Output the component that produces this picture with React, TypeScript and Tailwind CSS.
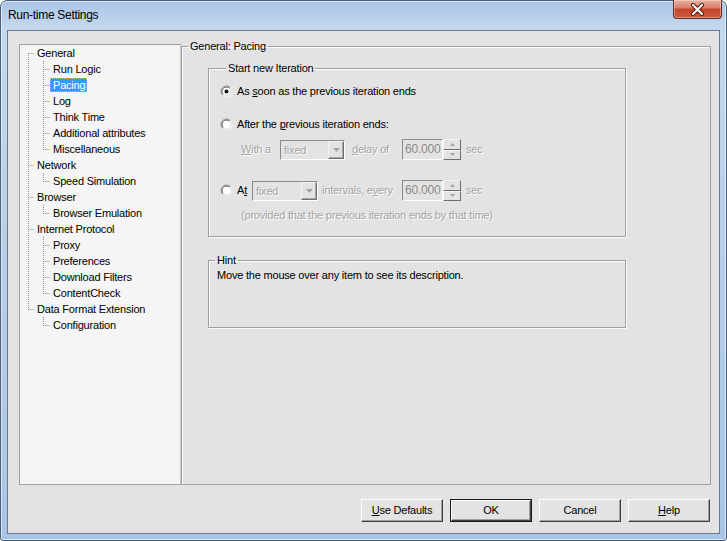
import React from 'react';

interface TreeItem {
  label: string;
  level: 0 | 1;
  first?: boolean;
  lastRoot?: boolean;
  lastChild?: boolean;
  underLast?: boolean;
  selected?: boolean;
}

const treeItems: TreeItem[] = [
  { label: 'General', level: 0, first: true },
  { label: 'Run Logic', level: 1 },
  { label: 'Pacing', level: 1, selected: true },
  { label: 'Log', level: 1 },
  { label: 'Think Time', level: 1 },
  { label: 'Additional attributes', level: 1 },
  { label: 'Miscellaneous', level: 1, lastChild: true },
  { label: 'Network', level: 0 },
  { label: 'Speed Simulation', level: 1, lastChild: true },
  { label: 'Browser', level: 0 },
  { label: 'Browser Emulation', level: 1, lastChild: true },
  { label: 'Internet Protocol', level: 0 },
  { label: 'Proxy', level: 1 },
  { label: 'Preferences', level: 1 },
  { label: 'Download Filters', level: 1 },
  { label: 'ContentCheck', level: 1, lastChild: true },
  { label: 'Data Format Extension', level: 0, lastRoot: true },
  { label: 'Configuration', level: 1, lastChild: true, underLast: true },
];

const dot = { stroke: '#8c8c8c', strokeWidth: 1, strokeDasharray: '1 1' };

const TreeLines: React.FC<{ item: TreeItem }> = ({ item }) => {
  if (item.level === 0) {
    return (
      <svg width="14" height="16" className="shrink-0">
        <line x1="8.5" y1={item.first ? 8 : 0} x2="8.5" y2={item.lastRoot ? 9 : 16} {...dot} />
        <line x1="8.5" y1="8.5" x2="14" y2="8.5" {...dot} />
      </svg>
    );
  }
  return (
    <svg width="30" height="16" className="shrink-0">
      {!item.underLast && <line x1="8.5" y1="0" x2="8.5" y2="16" {...dot} />}
      <line x1="23.5" y1="0" x2="23.5" y2={item.lastChild ? 9 : 16} {...dot} />
      <line x1="23.5" y1="8.5" x2="30" y2="8.5" {...dot} />
    </svg>
  );
};

const Radio: React.FC<{ checked?: boolean }> = ({ checked }) => (
  <svg width="13" height="13" viewBox="0 0 13 13" className="shrink-0">
    <circle cx="6.5" cy="6.5" r="5.5" fill="#fff" />
    <path d="M2.6 10.4 A5.5 5.5 0 0 1 10.4 2.6" fill="none" stroke="#8f8f8f" strokeWidth="1" />
    <path d="M10.4 2.6 A5.5 5.5 0 0 1 2.6 10.4" fill="none" stroke="#f4f4f4" strokeWidth="1" />
    <path d="M3.3 9.7 A4.5 4.5 0 0 1 9.7 3.3" fill="none" stroke="#555" strokeWidth="1" />
    <path d="M9.7 3.3 A4.5 4.5 0 0 1 3.3 9.7" fill="none" stroke="#d8d8d8" strokeWidth="1" />
    {checked && <circle cx="6.5" cy="6.5" r="2" fill="#111" />}
  </svg>
);

const dis = 'text-[#a3a3a3] [text-shadow:1px_1px_0_#ffffff]';

const Combo: React.FC<{ width: string }> = ({ width }) => (
  <div className={`${width} h-[20px] flex border border-t-[#8a8a8a] border-l-[#8a8a8a] border-r-white border-b-white`}>
    <div className={`flex-1 pl-[3px] leading-[18px] ${dis}`}>fixed</div>
    <div className="w-[16px] h-full flex items-center justify-center border border-t-[#f4f4f4] border-l-[#f4f4f4] border-r-[#6e6e6e] border-b-[#6e6e6e] shadow-[inset_-1px_-1px_0_#a8a8a8]">
      <svg width="7" height="4" viewBox="0 0 7 4">
        <path d="M0 0 H7 L3.5 4 Z" fill="#a3a3a3" />
      </svg>
    </div>
  </div>
);

const Spin: React.FC = () => (
  <div className="w-[59px] h-[21px] flex">
    <div className="w-[41px] h-full border border-t-[#8a8a8a] border-l-[#8a8a8a] border-r-white border-b-white pl-[2px] leading-[19px] text-[12px] text-[#8a8a8a]">
      60.000
    </div>
    <div className="w-[18px] h-full flex flex-col">
      <div className="flex-1 flex items-center justify-center border border-t-[#f4f4f4] border-l-[#f4f4f4] border-r-[#6e6e6e] border-b-[#6e6e6e]">
        <svg width="5" height="3" viewBox="0 0 5 3">
          <path d="M0 3 H5 L2.5 0 Z" fill="#a3a3a3" />
        </svg>
      </div>
      <div className="flex-1 flex items-center justify-center border border-t-[#f4f4f4] border-l-[#f4f4f4] border-r-[#6e6e6e] border-b-[#6e6e6e]">
        <svg width="5" height="3" viewBox="0 0 5 3">
          <path d="M0 0 H5 L2.5 3 Z" fill="#a3a3a3" />
        </svg>
      </div>
    </div>
  </div>
);

const Button: React.FC<{ children: React.ReactNode; isDefault?: boolean }> = ({ children, isDefault }) => {
  if (isDefault) {
    return (
      <div className="w-[82px] h-[23px] border border-[#1a1a1a]">
        <div className="w-full h-full flex items-center justify-center border border-t-white border-l-white border-r-[#404040] border-b-[#404040] shadow-[inset_-1px_-1px_0_#a0a0a0]">
          {children}
        </div>
      </div>
    );
  }
  return (
    <div className="w-[82px] h-[23px] flex items-center justify-center border border-t-white border-l-white border-r-[#404040] border-b-[#404040] shadow-[inset_-1px_-1px_0_#a0a0a0]">
      {children}
    </div>
  );
};

const App: React.FC = () => {
  return (
    <div className="w-[727px] h-[541px] overflow-hidden bg-white font-[family-name:'Liberation_Sans',Arial,sans-serif] text-black">
      <div className="h-full flex flex-col rounded-t-[7px] rounded-b-[3px] border border-[#4b5f7a] shadow-[inset_0_0_0_1px_rgba(255,255,255,0.55)] bg-[linear-gradient(180deg,#a9c5e6_0%,#c4d8ef_5%,#b8cfea_45%,#a9c5e6_100%)]">
        {/* title bar */}
        <div className="h-[29px] shrink-0 flex items-start">
          <span className="ml-[7px] mt-[7px] text-[12px] leading-[15px] tracking-[-0.3px]">Run-time Settings</span>
          <div className="ml-auto mr-[4px] -mt-px w-[49px] h-[19px] rounded-b-[4px] border border-t-0 border-[#6a2a20] bg-[linear-gradient(180deg,#eab0a2_0%,#d9806c_42%,#c3452d_52%,#cd5c40_100%)] shadow-[inset_0_0_0_1px_rgba(255,255,255,0.35)] flex items-center justify-center">
            <svg width="15" height="13" viewBox="0 0 15 13">
              <path d="M3 2 L12 11 M12 2 L3 11" stroke="#4a1208" strokeWidth="4" strokeLinecap="round" />
              <path d="M3 2 L12 11 M12 2 L3 11" stroke="#ffffff" strokeWidth="2.2" strokeLinecap="round" />
            </svg>
          </div>
        </div>

        {/* client area */}
        <div className="mx-[6px] mb-[6px] flex-1 flex flex-col border border-[#6b7a8c] bg-[#e3e3e3] text-[11px] tracking-[-0.2px] pt-[9px] pl-[11px] pr-[8px]">
          <div className="flex items-start">
            {/* tree */}
            <div className="mt-[4px] w-[162px] h-[441px] shrink-0 border border-[#a0a0a0] border-r-[#c8c8c8] bg-[#f5f5f5]">
              {treeItems.map((item) => (
                <div key={item.label} className="h-[16px] flex items-center">
                  <TreeLines item={item} />
                  <span
                    className={
                      item.selected
                        ? 'h-[14px] leading-[14px] pl-[3px] pr-[2px] bg-[#3399ff] text-white outline-1 outline-dotted outline-[#d9b870] -outline-offset-1'
                        : 'h-[14px] leading-[14px] pl-[3px] pr-[2px]'
                    }
                  >
                    {item.label}
                  </span>
                </div>
              ))}
            </div>

            {/* General: Pacing */}
            <fieldset className="flex-1 h-[445px] border border-[#a0a0a0] shadow-[inset_1px_1px_0_#fafafa]">
              <legend className="ml-[6px] px-[2px] leading-[13px]">General: Pacing</legend>

              <fieldset className="mt-[9px] ml-[26px] w-[418px] border border-[#a0a0a0] shadow-[inset_1px_1px_0_#fafafa,1px_1px_0_#fafafa] pl-[11px] pb-[13px]">
                <legend className="ml-[6px] px-[2px] leading-[13px]">Start new Iteration</legend>

                <div className="mt-[7px] h-[18px] flex items-center gap-[4px]">
                  <Radio checked />
                  <span>
                    As <u>s</u>oon as the previous iteration ends
                  </span>
                </div>

                <div className="mt-[15px] h-[18px] flex items-center gap-[4px]">
                  <Radio />
                  <span>
                    After the <u>p</u>revious iteration ends:
                  </span>
                </div>

                <div className="mt-[6px] h-[21px] pl-[21px] flex items-center">
                  <span className={`w-[39px] ${dis}`}>
                    <u>W</u>ith a
                  </span>
                  <Combo width="w-[65px]" />
                  <span className={`ml-[7px] w-[50px] ${dis}`}>
                    <u>d</u>elay of
                  </span>
                  <Spin />
                  <span className={`ml-[5px] ${dis}`}>sec</span>
                </div>

                <div className="mt-[20px] h-[21px] flex items-center">
                  <Radio />
                  <span className="ml-[4px] w-[15px]">
                    A<u>t</u>
                  </span>
                  <Combo width="w-[66px]" />
                  <span className={`ml-[4px] w-[80px] ${dis}`}>
                    intervals, e<u>v</u>ery
                  </span>
                  <Spin />
                  <span className={`ml-[5px] ${dis}`}>sec</span>
                </div>

                <div className={`mt-[6px] h-[16px] leading-[16px] pl-[21px] ${dis}`}>
                  (provided that the previous iteration ends by that time)
                </div>
              </fieldset>

              <fieldset className="mt-[17px] ml-[26px] w-[418px] border border-[#a0a0a0] shadow-[inset_1px_1px_0_#fafafa,1px_1px_0_#fafafa] pl-[8px] pt-[2px] pb-[45px]">
                <legend className="-ml-[2px] px-[2px] leading-[13px]">Hint</legend>
                <div className="leading-[13px]">Move the mouse over any item to see its description.</div>
              </fieldset>
            </fieldset>
          </div>

          {/* buttons */}
          <div className="mt-[14px] pr-[1px] flex justify-end gap-[7px]">
            <Button>
              <span>
                <u>U</u>se Defaults
              </span>
            </Button>
            <Button isDefault>OK</Button>
            <Button>Cancel</Button>
            <Button>
              <span>
                <u>H</u>elp
              </span>
            </Button>
          </div>
        </div>
      </div>
    </div>
  );
};

export default App;
